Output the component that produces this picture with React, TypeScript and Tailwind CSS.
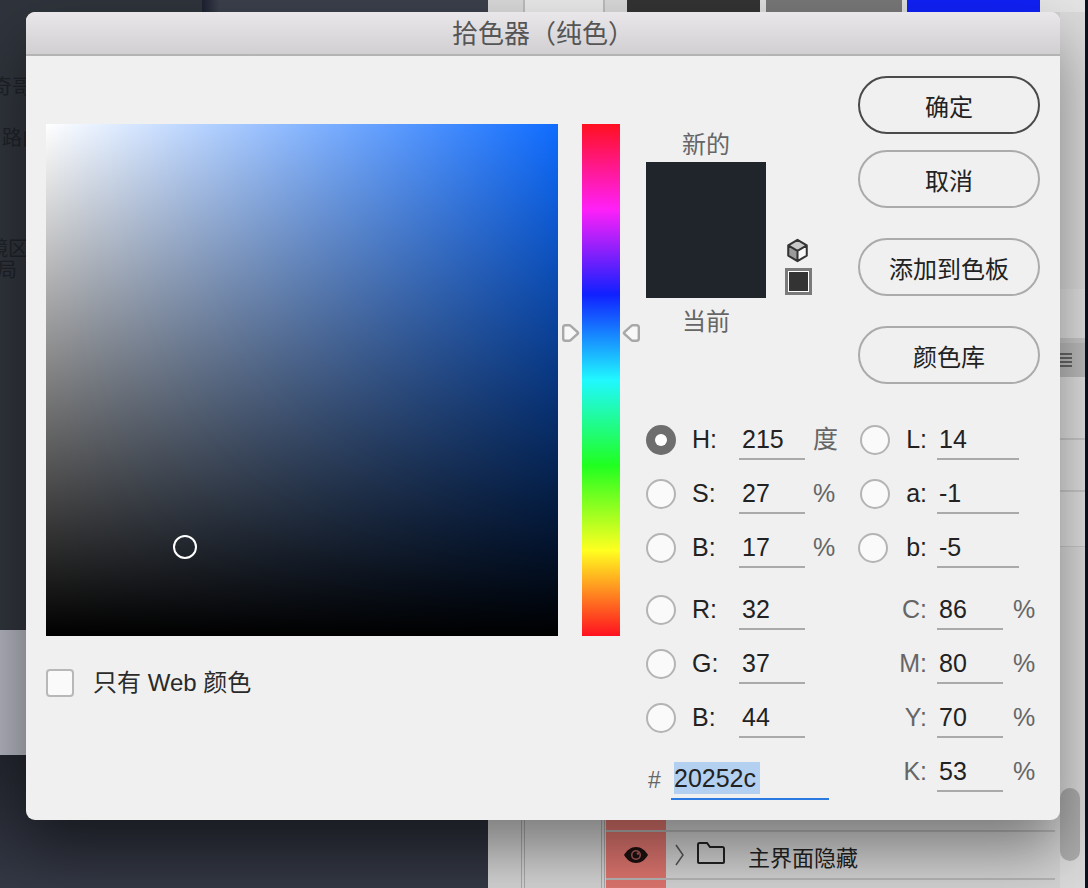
function Radio({ selected = false }: { selected?: boolean }) {
  if (selected) {
    return (
      <div className="flex h-[30px] w-[30px] shrink-0 items-center justify-center rounded-full bg-[#6e6e6e]">
        <div className="h-[12px] w-[12px] rounded-full bg-white" />
      </div>
    )
  }
  return <div className="h-[30px] w-[30px] shrink-0 rounded-full border-2 border-[#b4b4b4] bg-[#fafafa]" />
}

function LeftRow({ label, value, unit, selected }: { label: string; value: string; unit?: string; selected?: boolean }) {
  return (
    <div className="flex h-[54px] items-center">
      <Radio selected={selected} />
      <span className="ml-[16px] w-[47px] text-[#222]">{label}</span>
      <div className="h-[40px] w-[66px] border-b-2 border-[#aaa] pl-[3px] leading-[38px] text-[#222]">{value}</div>
      {unit && <span className="ml-[8px] text-[#666]">{unit}</span>}
    </div>
  )
}

function LabRow({ label, value, flush }: { label: string; value: string; flush?: boolean }) {
  return (
    <div className="flex h-[54px] items-center">
      <div className={flush ? 'flex w-[32px] justify-start' : 'flex w-[32px] justify-end'}>
        <Radio />
      </div>
      <span className="w-[37px] text-right text-[#222]">{label}</span>
      <div className="ml-[10px] h-[40px] w-[82px] border-b-2 border-[#aaa] pl-[2px] leading-[38px] text-[#222]">{value}</div>
    </div>
  )
}

function CmykRow({ label, value }: { label: string; value: string }) {
  return (
    <div className="flex h-[54px] items-center">
      <span className="ml-[32px] w-[37px] text-right text-[#666]">{label}</span>
      <div className="ml-[10px] h-[40px] w-[66px] border-b-2 border-[#aaa] pl-[2px] leading-[38px] text-[#222]">{value}</div>
      <span className="ml-[10px] text-[#666]">%</span>
    </div>
  )
}

function PillButton({ label, primary, className }: { label: string; primary?: boolean; className?: string }) {
  return (
    <button
      className={`h-[58px] w-[182px] rounded-full border-2 pt-[6px] text-[24px] text-[#222] ${
        primary ? 'border-[#4a4a4a]' : 'border-[#ababab]'
      } ${className ?? ''}`}
    >
      {label}
    </button>
  )
}

function Marker({ flip }: { flip?: boolean }) {
  return (
    <svg width="18" height="18" viewBox="0 0 18 18" className={flip ? 'absolute left-[40px] top-[200px] -scale-x-100' : 'absolute left-[-20px] top-[200px]'}>
      <path
        d="M3.500 1.200h3.500a2.500 2.500 0 0 1 1.700.7l7 6.300a1 1 0 0 1 0 1.600l-7 6.300a2.500 2.500 0 0 1-1.700.7h-3.500a2.300 2.300 0 0 1-2.300-2.300v-11a2.300 2.300 0 0 1 2.300-2.300z"
        fill="#f8f8f8"
        stroke="#a8a8a8"
        strokeWidth="2.400"
      />
    </svg>
  )
}

function ColorDialog() {
  return (
    <div className="absolute left-[26px] top-[12px] h-[808px] w-[1034px] overflow-hidden rounded-[9px] bg-[#f0f0f0] font-['Liberation_Sans','Noto_Sans_CJK_SC',sans-serif] text-[25px] shadow-[0_30px_60px_rgba(0,0,0,0.42)]">
      <div className="flex h-[44px] items-center justify-center border-b-2 border-[#b4b4b4] bg-[linear-gradient(to_bottom,#e9e7e9,#d1cfd1)] pt-[3px] text-[26px] text-[#555]">
        拾色器（纯色）
      </div>
      <div className="flex">
        {/* 色域 */}
        <div className="pl-[20px] pt-[68px]">
          <div className="relative h-[512px] w-[512px] bg-[linear-gradient(to_right,#ffffff,#0f6cff)]">
            <div className="h-full w-full bg-[linear-gradient(to_bottom,rgba(0,0,0,0),#000000)]" />
            <div className="absolute left-[127px] top-[411px] h-[24px] w-[24px] rounded-full border-2 border-white" />
          </div>
          <div className="mt-[29px] flex items-center">
            <div className="h-[28px] w-[28px] rounded-[4px] border-2 border-[#b8b8b8] bg-[#fafafa]" />
            <span className="ml-[19px] text-[24px] text-[#2a2a2a]">只有 Web 颜色</span>
          </div>
        </div>

        {/* 色相条 */}
        <div className="relative ml-[24px] mt-[68px] h-[512px] w-[38px] bg-[linear-gradient(to_bottom,#ff1020,#ff20f8_16.7%,#1020ff_33.3%,#20f8ff_50%,#20ff20_66.7%,#ffff20_83.3%,#ff1020)]">
          <Marker />
          <Marker flip />
        </div>

        {/* 右侧 */}
        <div className="ml-[26px] w-[394px] pt-[20px]">
          <div className="flex h-[337px] justify-between">
            <div className="flex">
              <div className="flex w-[120px] flex-col items-center pt-[55px] text-[24px] leading-[28px] text-[#666]">
                <span>新的</span>
                <div className="mt-[3px] h-[136px] w-[120px] bg-[#20252c]" />
                <span className="mt-[10px]">当前</span>
              </div>
              <div className="ml-[19px] flex flex-col items-center pt-[162px]">
                <svg width="23" height="25" viewBox="0 0 24 27" className="-ml-[2px]">
                  <path d="M12 2l10 6v11l-10 6-10-6v-11z" fill="#f8f8f8" />
                  <path d="M12 2l10 6-10 6-10-6z" fill="#c8c8c8" />
                  <path d="M2 8l10 6v11l-10-6z" fill="#9a9a9a" />
                  <path d="M12 2l10 6v11l-10 6-10-6v-11zM2 8l10 6 10-6M12 14v11" fill="none" stroke="#333" strokeWidth="2.200" strokeLinejoin="round" />
                </svg>
                <div className="mt-[5px] h-[27px] w-[27px] border-[3px] border-[#7a7a7a] bg-white p-[1px]">
                  <div className="h-full w-full bg-[#333]" />
                </div>
              </div>
            </div>
            <div className="flex flex-col">
              <PillButton label="确定" primary />
              <PillButton label="取消" className="mt-[16px]" />
              <PillButton label="添加到色板" className="mt-[30px]" />
              <PillButton label="颜色库" className="mt-[30px]" />
            </div>
          </div>

          <div className="flex">
            <div className="w-[212px]">
              <LeftRow label="H:" value="215" unit="度" selected />
              <LeftRow label="S:" value="27" unit="%" />
              <LeftRow label="B:" value="17" unit="%" />
              <div className="mt-[8px]">
                <LeftRow label="R:" value="32" />
                <LeftRow label="G:" value="37" />
                <LeftRow label="B:" value="44" />
              </div>
              <div className="flex h-[55px] items-end">
                <span className="mb-[3px] ml-[2px] w-[23px] text-[23px] font-medium text-[#666]">#</span>
                <div className="w-[158px] border-b-2 border-[#2a7ae2] pb-[4px] pl-[3px]">
                  <span className="block h-[32px] w-[86px] bg-[#b3d0f0] leading-[32px] text-[#222]">20252c</span>
                </div>
              </div>
            </div>
            <div className="w-[182px]">
              <LabRow label="L:" value="14" />
              <LabRow label="a:" value="-1" />
              <LabRow label="b:" value="-5" flush />
              <div className="mt-[8px]">
                <CmykRow label="C:" value="86" />
                <CmykRow label="M:" value="80" />
                <CmykRow label="Y:" value="70" />
                <CmykRow label="K:" value="53" />
              </div>
            </div>
          </div>
        </div>
      </div>
    </div>
  )
}

function EyeIcon() {
  return (
    <svg width="26" height="18" viewBox="0 0 26 18">
      <path d="M1 9c3-5 7-8 12-8s9 3 12 8c-3 5-7 8-12 8S4 14 1 9z" fill="#1c1010" />
      <circle cx="13" cy="9" r="5" fill="#a85a58" />
      <circle cx="13" cy="9" r="3.500" fill="#1c1010" />
      <circle cx="15" cy="7.500" r="1.300" fill="#a85a58" />
    </svg>
  )
}

function LayerRow({ height, children }: { height: string; children?: React.ReactNode }) {
  return (
    <div className={`flex ${height}`}>
      <div className="flex w-[60px] items-center justify-center bg-[#dd746e]">{children && <EyeIcon />}</div>
      <div className="flex flex-1 items-center">{children}</div>
    </div>
  )
}

export default function App() {
  return (
    <div className="relative flex h-[888px] w-[1088px] overflow-hidden bg-[#0c1020] font-['Liberation_Sans','Noto_Sans_CJK_SC',sans-serif]">
      {/* 背后的深色窗口 */}
      <div className="flex w-[488px] flex-col">
        <div className="flex h-[630px]">
          <div className="w-[202px] bg-[#2f333b] pt-[75px] text-[20px] leading-[24px] text-[#1e2126]">
            <div className="-ml-[8px]">奇哥</div>
            <div className="ml-[2px] mt-[27px]">路由器</div>
            <div className="-ml-[12px] mt-[87px]">镜区</div>
            <div className="-ml-[3px] -mt-[3px]">局</div>
          </div>
          <div className="flex-1 bg-[linear-gradient(to_right,#1c2030,#3a3f4b_6%)]" />
        </div>
        <div className="h-[125px] bg-[#aeb0ba]" />
        <div className="flex-1 bg-[linear-gradient(to_bottom,#22252d,#343845)]" />
      </div>

      {/* 图层面板 */}
      <div className="flex w-[572px] flex-col bg-[#d2d2d2]">
        <div className="flex h-[12px]">
          <div className="w-[37px] border-r-2 border-[#bbb] bg-[#d8d8d8]" />
          <div className="w-[80px] border-r-2 border-[#bbb] bg-[#e8e8e8]" />
          <div className="w-[22px] bg-[#d8d8d8]" />
          <div className="w-[133px] bg-[#333]" />
          <div className="w-[6px] bg-[#ddd]" />
          <div className="w-[136px] bg-[#777]" />
          <div className="w-[5px] bg-[#ddd]" />
          <div className="w-[133px] bg-[#1020f5]" />
          <div className="flex-1 bg-[#e4e4e4]" />
        </div>
        <div className="flex-1" />
        <div className="flex h-[68px]">
          <div className="flex w-[118px]">
            <div className="w-[33px]" />
            <div className="w-[4px] border-x border-[#a8a8a8]" />
            <div className="w-[76px]" />
            <div className="w-[4px] border-x border-[#a8a8a8]" />
          </div>
          <div className="w-[449px]">
            <LayerRow height="h-[10px]" />
            <div className="h-[2px] bg-[#b4b4b4]" />
            <LayerRow height="h-[46px]">
              <svg width="12" height="22" viewBox="0 0 12 22" className="ml-[8px]">
                <path d="M2 1l7 10-7 10" fill="none" stroke="#555" strokeWidth="1.500" />
              </svg>
              <svg width="30" height="24" viewBox="0 0 30 24" className="-mt-[4px] ml-[10px]">
                <path d="M2 21V3.500A1.500 1.500 0 0 1 3.500 2h7.500l3 4h12.500A1.500 1.500 0 0 1 28 7.500V21a1 1 0 0 1-1 1H3a1 1 0 0 1-1-1z" fill="none" stroke="#222" strokeWidth="2" />
              </svg>
              <span className="ml-[22px] mt-[6px] text-[22px] text-[#222]">主界面隐藏</span>
            </LayerRow>
            <div className="h-[2px] bg-[#b4b4b4]" />
            <LayerRow height="h-[8px]" />
          </div>
        </div>
      </div>

      {/* 右边的属性栏和滚动条 */}
      <div className="flex w-[25px] flex-col bg-[#dadada]">
        <div className="h-[12px] bg-[#e4e4e4]" />
        <div className="h-[277px]" />
        <div className="h-[49px] bg-[#e0e0e0]" />
        <div className="h-[5px] bg-[#c8c8c8]" />
        <div className="flex h-[34px] flex-col justify-center gap-[2px] bg-[#bcbcbc]">
          <div className="h-[2px] w-[12px] bg-[#666]" />
          <div className="h-[2px] w-[12px] bg-[#666]" />
          <div className="h-[2px] w-[12px] bg-[#666]" />
          <div className="h-[2px] w-[12px] bg-[#666]" />
        </div>
        <div className="h-[63px] border-b-2 border-[#c8c8c8] bg-[#e0e0e0]" />
        <div className="h-[52px] border-b-2 border-[#c8c8c8] bg-[#e0e0e0]" />
        <div className="h-[55px] border-b border-[#c8c8c8] bg-[#e0e0e0]" />
        <div className="mt-[241px] h-[73px] w-[20px] rounded-full bg-[#adadad]" />
      </div>

      <div className="flex-1" />

      <ColorDialog />
    </div>
  )
}
